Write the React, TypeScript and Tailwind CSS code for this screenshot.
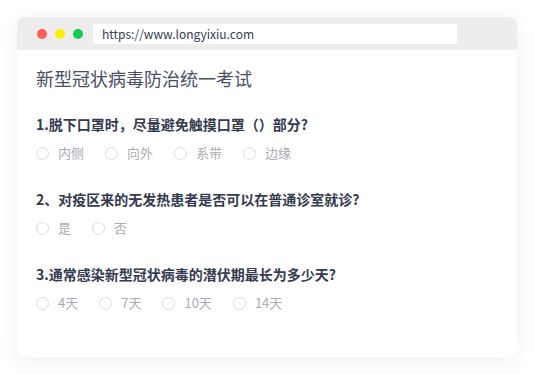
import React, { FC } from "react";

interface IQuestion {
  title: string;
  options: string[];
}

const questions: IQuestion[] = [
  { title: "1.脱下口罩时，尽量避免触摸口罩（）部分?", options: ["内侧", "向外", "系带", "边缘"] },
  { title: "2、对疫区来的无发热患者是否可以在普通诊室就诊?", options: ["是", "否"] },
  { title: "3.通常感染新型冠状病毒的潜伏期最长为多少天?", options: ["4天", "7天", "10天", "14天"] },
];

const font = { fontFamily: '"Noto Sans CJK SC", "Noto Sans", sans-serif' };

const Question: FC<{ q: IQuestion; first?: boolean }> = ({ q, first }) => {
  return (
    <div className={first ? "mt-[24px]" : "mt-[26px]"}>
      <div className="text-[14px] leading-[20px] font-bold text-[#343a4f]">{q.title}</div>
      <div className="mt-[9px] flex items-center h-[20px]">
        {q.options.map((o) => (
          <label key={o} className="flex items-center mr-[21px] text-[13px] leading-[20px] text-[#a9acb4]">
            <span className="w-[13px] h-[13px] rounded-full border border-[#dcdde0] bg-white" />
            <span className="ml-[9px]">{o}</span>
          </label>
        ))}
      </div>
    </div>
  );
};

export default function App() {
  return (
    <div className="w-[534px] h-[374px] bg-white pt-[17px] pl-[17px]" style={font}>
      <div className="w-[500px] h-[340px] rounded-lg bg-white overflow-hidden shadow-[0_4px_22px_rgba(30,40,80,0.07)]">
        <div className="h-[33px] bg-[#ededed] flex items-center pl-5">
          <div className="flex gap-[8px]">
            <span className="w-[10px] h-[10px] rounded-full bg-[#fe5f57]" />
            <span className="w-[10px] h-[10px] rounded-full bg-[#fdf000]" />
            <span className="w-[10px] h-[10px] rounded-full bg-[#13cb50]" />
          </div>
          <div className="ml-[10px] w-[364px] h-[20px] bg-white rounded-[2px] flex items-center pl-[9px] text-[12px] text-[#363c52]">
            https://www.longyixiu.com
          </div>
        </div>
        <div className="pl-[19px] pt-[16px]">
          <div className="text-[18px] leading-[24px] text-[#4a4f66]">新型冠状病毒防治统一考试</div>
          {questions.map((q, i) => (
            <Question key={q.title} q={q} first={i === 0} />
          ))}
        </div>
      </div>
    </div>
  );
}
